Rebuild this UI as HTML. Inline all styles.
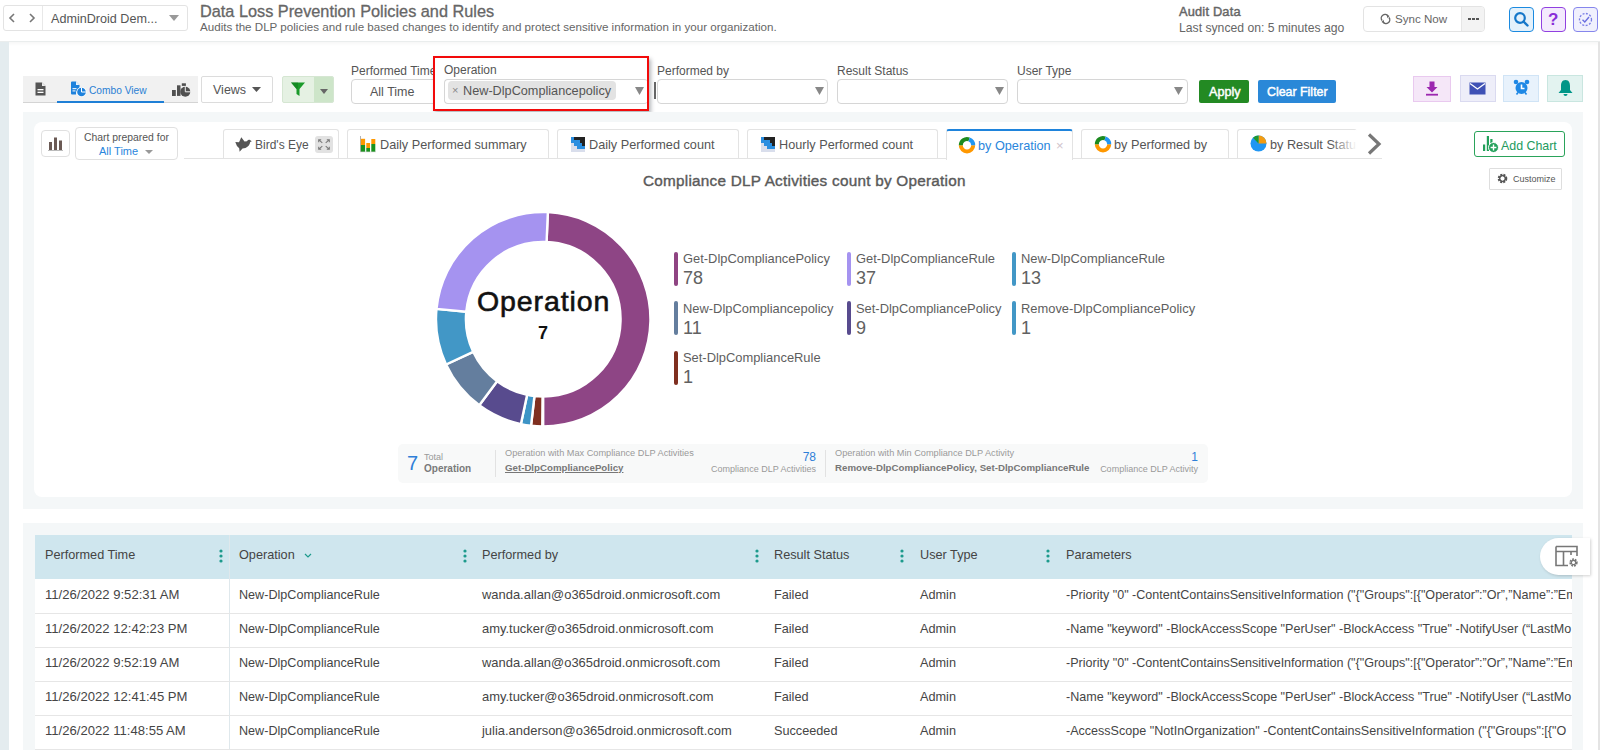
<!DOCTYPE html>
<html><head><meta charset="utf-8">
<style>
*{box-sizing:border-box;margin:0;padding:0}
html,body{width:1600px;height:750px;overflow:hidden;background:#fff;font-family:"Liberation Sans",sans-serif;color:#555}
.a{position:absolute}
.t{position:absolute;white-space:nowrap;line-height:1}
/* header */
#hdr{left:0;top:0;width:1600px;height:42px;background:#fff;border-bottom:1px solid #eaeded;box-shadow:0 2px 3px rgba(0,20,20,0.035)}
#lstrip{left:0;top:42px;width:9px;height:709px;background:#e4ecef}
#rstrip{left:1598px;top:42px;width:2px;height:709px;background:#e4e4e4}
.panel{background:#f4f7f8}
.card{background:#fff;border-radius:8px}
.box{border:1px solid #dcdcdc;border-radius:4px;background:#fff}
.tab{top:129px;height:29px;border:1px solid #e3e3e3;border-bottom:none;border-radius:3px 3px 0 0;background:#fff}
.tab.act{border-top:2px solid #1f84dc;height:31px}
.tt{top:139px;font-size:12.7px;color:#555}
.th{top:14px;font-size:12.7px;color:#444}
.td{font-size:12.7px;color:#454545}
</style></head>
<body>
<!-- HEADER -->
<div id="hdr" class="a"></div>
<div class="a box" style="left:3px;top:5px;width:185px;height:26px;border-color:#e3e3e3;border-radius:3px"></div>
<div class="a" style="left:42px;top:6px;width:1px;height:24px;background:#e8e8e8"></div>
<div class="t" style="left:51px;top:13px;font-size:12.6px;color:#555">AdminDroid Dem...</div>
<div class="t" style="left:200px;top:3px;font-size:16.3px;color:#666;-webkit-text-stroke:0.3px #666">Data Loss Prevention Policies and Rules</div>
<div class="t" style="left:200px;top:21px;font-size:11.6px;color:#666">Audits the DLP policies and rule based changes to identify and protect sensitive information in your organization.</div>
<div class="t" style="left:1179px;top:6px;font-size:12.8px;letter-spacing:0.2px;color:#666;-webkit-text-stroke:0.45px #666">Audit Data</div>
<div class="t" style="left:1179px;top:22px;font-size:12.2px;color:#666">Last synced on: 5 minutes ago</div>


<!-- nav arrows -->
<svg class="a" style="left:8px;top:13px" width="8" height="10" viewBox="0 0 8 10"><path d="M6 1 L2 5 L6 9" fill="none" stroke="#777" stroke-width="1.6"/></svg>
<svg class="a" style="left:28px;top:13px" width="8" height="10" viewBox="0 0 8 10"><path d="M2 1 L6 5 L2 9" fill="none" stroke="#777" stroke-width="1.6"/></svg>
<svg class="a" style="left:169px;top:15px" width="10" height="6" viewBox="0 0 10 6"><path d="M0 0 H10 L5 6Z" fill="#999"/></svg>
<!-- sync -->
<div class="a box" style="left:1363px;top:6px;width:122px;height:26px;border-color:#e3e3e3;overflow:hidden">
  <div class="a" style="left:97px;top:0;width:24px;height:26px;background:#f3f3f3;border-left:1px solid #e6e6e6"></div>
</div>
<svg class="a" style="left:1380px;top:13px" width="11" height="12" viewBox="0 0 11 12"><path d="M2 7.5 A3.7 3.7 0 0 1 8 3 M9 4.5 A3.7 3.7 0 0 1 3 9" fill="none" stroke="#666" stroke-width="1.4"/><path d="M6.5 1.5 L9.5 3 L7.5 5.2Z M4.5 10.5 L1.5 9 L3.5 6.8Z" fill="#666"/></svg>
<div class="t" style="left:1395px;top:13px;font-size:11.6px;color:#666">Sync Now</div>
<div class="a" style="left:1468px;top:18px;width:3px;height:2px;background:#555;box-shadow:4px 0 #555,8px 0 #555"></div>
<!-- search/help/check -->
<div class="a" style="left:1509px;top:7px;width:25px;height:25px;border:1.5px solid #1b8ae0;border-radius:4px;background:#e4f1fb"></div>
<svg class="a" style="left:1513px;top:11px" width="17" height="17" viewBox="0 0 17 17"><circle cx="7" cy="7" r="4.8" fill="none" stroke="#1577c9" stroke-width="2.2"/><path d="M10.5 10.5 L14.5 14.5" stroke="#1577c9" stroke-width="2.4" stroke-linecap="round"/></svg>
<div class="a" style="left:1541px;top:7px;width:25px;height:25px;border:1.5px solid #9140e0;border-radius:4px;background:#f3eafd"></div>
<div class="t" style="left:1548px;top:11px;font-size:17px;font-weight:bold;color:#8a2fd8">?</div>
<div class="a" style="left:1573px;top:7px;width:25px;height:25px;border:1.5px solid #8686ec;border-radius:4px;background:#f0f0fd"></div>
<svg class="a" style="left:1577px;top:11px" width="17" height="17" viewBox="0 0 17 17"><circle cx="8.5" cy="8.5" r="6" fill="none" stroke="#7a7ee6" stroke-width="1.3" stroke-dasharray="2 1.5"/><path d="M5.5 8.8 L7.8 11 L12 6" fill="none" stroke="#6a6ee0" stroke-width="1.4"/></svg>

<!-- FILTER ROW -->
<div class="a" style="left:23px;top:76px;width:175px;height:27px;background:#f1f1f1;border-bottom:1px solid #d4d4d4"></div>
<div class="a" style="left:57px;top:101px;width:107px;height:2px;background:#1f7fd6"></div>
<svg class="a" style="left:35px;top:82px" width="11" height="14" viewBox="0 0 11 14"><path d="M0.5 0.5 H7 L10.5 4 V13.5 H0.5Z" fill="#555"/><path d="M7 0.5 V4 H10.5Z" fill="#fff" opacity=".9"/><rect x="2.5" y="7" width="6" height="1.3" fill="#fff"/><rect x="2.5" y="9.7" width="6" height="1.3" fill="#fff"/></svg>
<svg class="a" style="left:70px;top:81px" width="17" height="16" viewBox="0 0 17 16"><path d="M1 1.5 Q1 0.5 2 0.5 H6 L9.5 4 V8 A5 5 0 0 0 6 13.5 H2 Q1 13.5 1 12.5Z" fill="#1e82dc"/><path d="M6 0.5 V4 H9.5Z" fill="#fff" opacity=".9"/><rect x="2.5" y="7" width="4" height="1.2" fill="#fff" opacity=".85"/><rect x="2.5" y="9.3" width="3" height="1.2" fill="#fff" opacity=".85"/><circle cx="11.5" cy="11" r="5" fill="#fff"/><circle cx="11.5" cy="11" r="4.3" fill="#1e82dc"/><path d="M11.5 6.7 V11 H15.8" fill="none" stroke="#fff" stroke-width="1"/></svg>
<div class="t" style="left:89px;top:86px;font-size:10.2px;color:#2a7fd4">Combo View</div>
<svg class="a" style="left:171px;top:83px" width="21" height="15" viewBox="0 0 21 15"><rect x="1" y="7" width="3.8" height="6" fill="#505050"/><rect x="6" y="2.3" width="3.5" height="10.6" fill="#505050"/><rect x="10.8" y="0.3" width="4.1" height="2.6" fill="#505050"/><circle cx="14.3" cy="8.8" r="5" fill="#505050"/><path d="M14.3 8.8 V3.3 M14.3 8.8 H19.8" stroke="#f1f1f1" stroke-width="1"/></svg>
<div class="a box" style="left:201px;top:76px;width:72px;height:27px;border-color:#dcdcdc;border-radius:2px"></div>
<div class="t" style="left:213px;top:84px;font-size:12.5px;color:#555">Views</div>
<svg class="a" style="left:252px;top:87px" width="9" height="5" viewBox="0 0 9 5"><path d="M0 0 H9 L4.5 5Z" fill="#555"/></svg>
<div class="a" style="left:282px;top:76px;width:52px;height:27px;background:#e5f1e3;border:1px solid #d5e6d2;border-radius:2px;overflow:hidden"><div class="a" style="left:31px;top:0;width:20px;height:26px;background:#cde5c9"></div></div>
<svg class="a" style="left:291px;top:82px" width="14" height="15" viewBox="0 0 14 15"><path d="M0 0.5 H14 L8.5 7 V14 L5.5 12 V7Z" fill="#1a9a2a"/><path d="M0 0.5 H7 V6 L5.5 7Z" fill="#0e7a1c" opacity=".5"/></svg>
<svg class="a" style="left:320px;top:89px" width="8" height="5" viewBox="0 0 8 5"><path d="M0 0 H8 L4 5Z" fill="#666"/></svg>

<div class="t" style="left:351px;top:65px;font-size:12px;color:#555">Performed Time</div>
<div class="a box" style="left:351px;top:79px;width:100px;height:25px;border-color:#d6d6d6"></div>
<div class="t" style="left:370px;top:86px;font-size:12.5px;color:#555">All Time</div>

<!-- Operation highlighted -->
<div class="a" style="left:433px;top:56px;width:216px;height:55px;background:#fff;border:2px solid #f20a0a;box-shadow:2px 3px 4px rgba(40,50,60,0.35)"></div>
<div class="t" style="left:444px;top:64px;font-size:12px;color:#555">Operation</div>
<div class="a box" style="left:444px;top:79px;width:204px;height:25px;border-color:#d6d6d6;border-right:none"></div>
<div class="a" style="left:448px;top:81px;width:168px;height:19px;background:#e3e3e3;border-radius:4px"></div>
<div class="t" style="left:452px;top:85px;font-size:11px;color:#888">×</div>
<div class="t" style="left:463px;top:85px;font-size:12.7px;color:#555">New-DlpCompliancepolicy</div>
<svg class="a" style="left:635px;top:87px" width="9" height="8" viewBox="0 0 9 8"><path d="M0 0 H9 L4.5 8Z" fill="#888"/></svg>
<div class="a" style="left:647px;top:58px;width:2px;height:51px;background:#f20a0a"></div>
<div class="a" style="left:654px;top:82px;width:1.5px;height:17px;background:#666"></div>

<div class="t" style="left:657px;top:65px;font-size:12px;color:#555">Performed by</div>
<div class="a box" style="left:657px;top:79px;width:171px;height:25px;border-color:#d6d6d6"></div>
<svg class="a" style="left:815px;top:87px" width="9" height="8" viewBox="0 0 9 8"><path d="M0 0 H9 L4.5 8Z" fill="#888"/></svg>
<div class="t" style="left:837px;top:65px;font-size:12px;color:#555">Result Status</div>
<div class="a box" style="left:837px;top:79px;width:171px;height:25px;border-color:#d6d6d6"></div>
<svg class="a" style="left:995px;top:87px" width="9" height="8" viewBox="0 0 9 8"><path d="M0 0 H9 L4.5 8Z" fill="#888"/></svg>
<div class="t" style="left:1017px;top:65px;font-size:12px;color:#555">User Type</div>
<div class="a box" style="left:1017px;top:79px;width:171px;height:25px;border-color:#d6d6d6"></div>
<svg class="a" style="left:1174px;top:87px" width="9" height="8" viewBox="0 0 9 8"><path d="M0 0 H9 L4.5 8Z" fill="#888"/></svg>

<div class="a" style="left:1199px;top:80px;width:50px;height:23px;background:#238a23;border-radius:2px"></div>
<div class="t" style="left:1209px;top:86px;font-size:12.6px;color:#fff;-webkit-text-stroke:0.45px #fff">Apply</div>
<div class="a" style="left:1258px;top:80px;width:78px;height:23px;background:#2a88d8;border-radius:2px"></div>
<div class="t" style="left:1267px;top:86px;font-size:12.4px;color:#fff;-webkit-text-stroke:0.45px #fff">Clear Filter</div>

<div class="a" style="left:1413px;top:76px;width:38px;height:26px;background:#f5e7f8;border:1px solid #e9c9ef"></div>
<svg class="a" style="left:1425px;top:81px" width="14" height="15" viewBox="0 0 14 15"><path d="M4.5 0.5 H9.5 V6 H12.5 L7 11.5 L1.5 6 H4.5Z" fill="#9c27b0"/><rect x="1" y="12.8" width="12" height="1.8" fill="#9c27b0"/></svg>
<div class="a" style="left:1460px;top:75px;width:36px;height:27px;background:#eeeef9;border:1px solid #dadaf0"></div>
<svg class="a" style="left:1469px;top:82px" width="17" height="13" viewBox="0 0 17 13"><rect x="0.5" y="0.5" width="16" height="12" fill="#3f51b5"/><path d="M1 1.5 L8.5 7 L16 1.5" fill="none" stroke="#fff" stroke-width="1.3"/></svg>
<div class="a" style="left:1503px;top:75px;width:36px;height:27px;background:#e8f2fc;border:1px solid #d0e4f6"></div>
<svg class="a" style="left:1513px;top:79px" width="17" height="17" viewBox="0 0 17 17"><circle cx="8.5" cy="9" r="6" fill="#1e88e5"/><path d="M8.5 5.5 V9.5 H11.5" fill="none" stroke="#fff" stroke-width="1.6"/><circle cx="3" cy="3" r="2.3" fill="#1e88e5"/><circle cx="14" cy="3" r="2.3" fill="#1e88e5"/><path d="M3.5 15.5 L5 13.5 M13.5 15.5 L12 13.5" stroke="#1e88e5" stroke-width="1.6"/></svg>
<div class="a" style="left:1547px;top:75px;width:36px;height:27px;background:#e3f3f0;border:1px solid #c9e6e0"></div>
<svg class="a" style="left:1558px;top:79px" width="15" height="18" viewBox="0 0 15 18"><path d="M7.5 1 C4 1 3 4 3 7 V11 L0.5 14 H14.5 L12 11 V7 C12 4 11 1 7.5 1Z" fill="#009688"/><path d="M5.5 15 H9.5 A2 2 0 0 1 5.5 15Z" fill="#009688"/></svg>


<!-- CHART PANEL -->
<div class="a panel" style="left:23px;top:112px;width:1560px;height:397px"></div>
<div class="a card" style="left:34px;top:122px;width:1538px;height:375px"></div>
<div class="a box" style="left:41px;top:130px;width:29px;height:27px;border-color:#e0e0e0"></div>
<svg class="a" style="left:48px;top:136px" width="15" height="15" viewBox="0 0 15 15"><rect x="1" y="6" width="3" height="8" fill="#6b5a55"/><rect x="6" y="1.5" width="3" height="12.5" fill="#6b5a55"/><rect x="11" y="4.5" width="3" height="9.5" fill="#6b5a55"/><rect x="0" y="14" width="15" height="1" fill="#bbb"/></svg>
<div class="a box" style="left:75px;top:127px;width:103px;height:33px;border-color:#e0e0e0"></div>
<div class="t" style="left:84px;top:133px;font-size:10.4px;color:#555">Chart prepared for</div>
<div class="t" style="left:99px;top:146px;font-size:11px;color:#2a86dc">All Time</div>
<svg class="a" style="left:145px;top:150px" width="8" height="4" viewBox="0 0 8 4"><path d="M0 0 H8 L4 4Z" fill="#999"/></svg>

<!-- tabs -->
<div class="a" style="left:184px;top:158px;width:1198px;height:1px;background:#e3e3e3"></div>
<div class="a tab" style="left:223px;width:116px"></div>
<div class="a tab" style="left:347px;width:202px"></div>
<div class="a tab" style="left:557px;width:182px"></div>
<div class="a tab" style="left:747px;width:191px"></div>
<div class="a tab act" style="left:946px;width:127px"></div>
<div class="a tab" style="left:1081px;width:148px"></div>
<div class="a tab" style="left:1237px;width:120px;border-right:none"></div>

<svg class="a" style="left:235px;top:137px" width="18" height="16" viewBox="0 0 18 16"><path d="M0.3 5 L4 5.3 L6.3 0.3 L9.5 4.5 L12 4.2 Q13 2.5 14.6 2.8 L16.8 4.2 L15.2 5.1 Q14.8 9 10.5 11 L7.5 11.6 L4.6 14.8 L4.2 11.2 Q1.5 9.5 0.3 5Z" fill="#555"/></svg>
<div class="t tt" style="left:255px;font-size:12px">Bird's Eye</div>
<div class="a" style="left:315px;top:136px;width:18px;height:17px;background:#e2e2e2;border-radius:3px"></div>
<svg class="a" style="left:318px;top:139px" width="12" height="11" viewBox="0 0 12 11"><path d="M0.7 3.2 V0.7 H3.2 M8.8 0.7 H11.3 V3.2 M11.3 7.8 V10.3 H8.8 M3.2 10.3 H0.7 V7.8 M0.9 0.9 L4.3 3.9 M11.1 0.9 L7.7 3.9 M11.1 10.1 L7.7 7.1 M0.9 10.1 L4.3 7.1" fill="none" stroke="#7a7a7a" stroke-width="1.1"/></svg>

<svg class="a" style="left:360px;top:136px" width="16" height="17" viewBox="0 0 16 17"><rect x="0" y="0" width="0.9" height="16" fill="#aaa"/><rect x="0.9" y="2.8" width="4.2" height="6.2" fill="#ff9800"/><rect x="0.9" y="9" width="4.2" height="7" fill="#1b921f"/><rect x="6.3" y="7" width="3.7" height="5" fill="#ff9800"/><rect x="6.3" y="12" width="3.7" height="4" fill="#1b921f"/><rect x="11.3" y="3" width="4" height="5" fill="#ff9800"/><rect x="11.3" y="8" width="4" height="8" fill="#1b921f"/><rect x="0" y="15.6" width="16" height="0.6" fill="#ccc"/></svg>
<div class="t tt" style="left:380px">Daily Performed summary</div>

<svg class="a" style="left:571px;top:137px" width="14" height="15" viewBox="0 0 14 15"><rect x="0" y="0" width="14" height="15" fill="#d9deec"/><rect x="0" y="0" width="3" height="3" fill="#2a8ee0"/><rect x="3" y="0" width="11" height="3" fill="#222"/><rect x="0" y="3" width="9" height="3" fill="#2a8ee0"/><rect x="9" y="3" width="5" height="3" fill="#222"/><rect x="3" y="6" width="8" height="3" fill="#2a8ee0"/><rect x="11" y="6" width="3" height="3" fill="#222"/><rect x="6" y="9" width="8" height="3" fill="#2a8ee0"/></svg>
<div class="t tt" style="left:589px">Daily Performed count</div>
<svg class="a" style="left:761px;top:137px" width="14" height="15" viewBox="0 0 14 15"><rect x="0" y="0" width="14" height="15" fill="#d9deec"/><rect x="0" y="0" width="3" height="3" fill="#2a8ee0"/><rect x="3" y="0" width="11" height="3" fill="#222"/><rect x="0" y="3" width="9" height="3" fill="#2a8ee0"/><rect x="9" y="3" width="5" height="3" fill="#222"/><rect x="3" y="6" width="8" height="3" fill="#2a8ee0"/><rect x="11" y="6" width="3" height="3" fill="#222"/><rect x="6" y="9" width="8" height="3" fill="#2a8ee0"/></svg>
<div class="t tt" style="left:779px">Hourly Performed count</div>

<svg class="a" style="left:958px;top:136px" width="18" height="18" viewBox="0 0 18 18"><path d="M15.2 9.2 A6.2 6.2 0 0 1 2.8 9.2" fill="none" stroke="#ff9800" stroke-width="4"/><path d="M2.8 9.2 A6.2 6.2 0 0 1 11.12 3.37" fill="none" stroke="#1b8a1f" stroke-width="4"/><path d="M11.12 3.37 A6.2 6.2 0 0 1 15.2 9.2" fill="none" stroke="#2196f3" stroke-width="4"/></svg>
<div class="t tt" style="left:978px;top:140px;color:#2a86dc">by Operation</div>
<div class="t" style="left:1056px;top:139px;font-size:13px;color:#d0c4cc">×</div>
<svg class="a" style="left:1093.5px;top:135.2px" width="18" height="18" viewBox="0 0 18 18"><path d="M15.2 9.2 A6.2 6.2 0 0 1 2.8 9.2" fill="none" stroke="#ff9800" stroke-width="4"/><path d="M2.8 9.2 A6.2 6.2 0 0 1 11.12 3.37" fill="none" stroke="#1b8a1f" stroke-width="4"/><path d="M11.12 3.37 A6.2 6.2 0 0 1 15.2 9.2" fill="none" stroke="#2196f3" stroke-width="4"/></svg>
<div class="t tt" style="left:1114px">by Performed by</div>
<svg class="a" style="left:1250px;top:135px" width="17" height="17" viewBox="0 0 17 17"><circle cx="8.5" cy="8.5" r="8" fill="#2196f3"/><path d="M8.5 8.5 V0.5 A8 8 0 0 1 16.5 8.5Z" fill="#f39c12"/><path d="M8.5 8.5 V0.5 A8 8 0 0 0 3 2.7Z" fill="#1f9a2f"/></svg>
<div class="t tt" style="left:1270px">by Result Statu</div>
<div class="a" style="left:1330px;top:130px;width:27px;height:27px;background:linear-gradient(to right,rgba(255,255,255,0),#fff)"></div>
<svg class="a" style="left:1367px;top:133px" width="15" height="22" viewBox="0 0 15 22"><path d="M2 1.5 L12 11 L2 20.5" fill="none" stroke="#777" stroke-width="3.2"/></svg>

<div class="a" style="left:1474px;top:131px;width:91px;height:26px;border:1.5px solid #2aa35a;border-radius:3px;background:#fff"></div>
<svg class="a" style="left:1482px;top:135px" width="17" height="18" viewBox="0 0 17 18"><rect x="1" y="9.5" width="2.2" height="6.5" fill="#22a05a"/><rect x="4.8" y="1" width="2.2" height="15" fill="#22a05a"/><rect x="8.3" y="4" width="2.2" height="8" fill="#22a05a"/><circle cx="11.5" cy="12.5" r="5" fill="#22a05a" stroke="#fff" stroke-width="1"/><path d="M11.5 9.6 V15.4 M8.6 12.5 H14.4" stroke="#fff" stroke-width="1.4"/></svg>
<div class="t" style="left:1501px;top:140px;font-size:12.4px;color:#239a5e">Add Chart</div>
<div class="a box" style="left:1489px;top:168px;width:73px;height:22px;border-color:#dedede;border-radius:1px"></div>
<svg class="a" style="left:1497px;top:173px" width="11" height="11" viewBox="0 0 11 11"><circle cx="5.5" cy="5.5" r="3.6" fill="none" stroke="#555" stroke-width="2.4" stroke-dasharray="1.9 1"/><circle cx="5.5" cy="5.5" r="2.8" fill="none" stroke="#555" stroke-width="1.3"/></svg>
<div class="t" style="left:1513px;top:175px;font-size:9px;color:#555">Customize</div>

<div class="t" style="left:643px;top:173px;font-size:15.3px;letter-spacing:0.25px;color:#5a5a5a;-webkit-text-stroke:0.4px #5a5a5a">Compliance DLP Activities count by Operation</div>

<svg class="a" style="left:436.1px;top:211.6px" width="214.4" height="214.4" viewBox="0 0 214.4 214.4"><path d="M111.88 0.10 A107.20 107.20 0 0 1 107.20 214.40 L107.20 184.50 A77.30 77.30 0 0 0 110.57 29.97Z" fill="#8e4585" stroke="#fff" stroke-width="2.4" stroke-linejoin="miter"/><path d="M106.26 214.40 A107.20 107.20 0 0 1 95.06 213.71 L98.45 184.00 A77.30 77.30 0 0 0 106.53 184.50Z" fill="#7f2f20" stroke="#fff" stroke-width="2.4" stroke-linejoin="miter"/><path d="M95.06 213.71 A107.20 107.20 0 0 1 84.91 212.06 L91.13 182.81 A77.30 77.30 0 0 0 98.45 184.00Z" fill="#3d94c6" stroke="#fff" stroke-width="2.4" stroke-linejoin="miter"/><path d="M84.91 212.06 A107.20 107.20 0 0 1 43.28 193.26 L61.11 169.26 A77.30 77.30 0 0 0 91.13 182.81Z" fill="#584b8e" stroke="#fff" stroke-width="2.4" stroke-linejoin="miter"/><path d="M43.28 193.26 A107.20 107.20 0 0 1 10.04 152.50 L37.14 139.87 A77.30 77.30 0 0 0 61.11 169.26Z" fill="#647e9e" stroke="#fff" stroke-width="2.4" stroke-linejoin="miter"/><path d="M10.04 152.50 A107.20 107.20 0 0 1 0.49 96.93 L30.26 99.79 A77.30 77.30 0 0 0 37.14 139.87Z" fill="#4297c6" stroke="#fff" stroke-width="2.4" stroke-linejoin="miter"/><path d="M0.49 96.93 A107.20 107.20 0 0 1 111.88 0.10 L110.57 29.97 A77.30 77.30 0 0 0 30.26 99.79Z" fill="#a593f0" stroke="#fff" stroke-width="2.4" stroke-linejoin="miter"/></svg>
<div class="t" style="left:477px;top:287px;font-size:28.5px;letter-spacing:0.9px;color:#111;-webkit-text-stroke:0.6px #111">Operation</div>
<div class="t" style="left:538px;top:324px;font-size:18px;font-weight:bold;color:#111">7</div>
<div class="a" style="left:674px;top:252px;width:4px;height:34px;border-radius:2px;background:#8f4482"></div><div class="t" style="left:683px;top:253px;font-size:12.9px;color:#5e5e5e">Get-DlpCompliancePolicy</div><div class="t" style="left:683px;top:269px;font-size:18px;color:#616161">78</div>
<div class="a" style="left:847px;top:252px;width:4px;height:34px;border-radius:2px;background:#a593f0"></div><div class="t" style="left:856px;top:253px;font-size:12.9px;color:#5e5e5e">Get-DlpComplianceRule</div><div class="t" style="left:856px;top:269px;font-size:18px;color:#616161">37</div>
<div class="a" style="left:1012px;top:252px;width:4px;height:34px;border-radius:2px;background:#4297c6"></div><div class="t" style="left:1021px;top:253px;font-size:12.9px;color:#5e5e5e">New-DlpComplianceRule</div><div class="t" style="left:1021px;top:269px;font-size:18px;color:#616161">13</div>
<div class="a" style="left:674px;top:301px;width:4px;height:34px;border-radius:2px;background:#647e9e"></div><div class="t" style="left:683px;top:303px;font-size:12.9px;color:#5e5e5e">New-DlpCompliancepolicy</div><div class="t" style="left:683px;top:319px;font-size:18px;color:#616161">11</div>
<div class="a" style="left:847px;top:301px;width:4px;height:34px;border-radius:2px;background:#584b8e"></div><div class="t" style="left:856px;top:303px;font-size:12.9px;color:#5e5e5e">Set-DlpCompliancePolicy</div><div class="t" style="left:856px;top:319px;font-size:18px;color:#616161">9</div>
<div class="a" style="left:1012px;top:301px;width:4px;height:34px;border-radius:2px;background:#4297c6"></div><div class="t" style="left:1021px;top:303px;font-size:12.9px;color:#5e5e5e">Remove-DlpCompliancePolicy</div><div class="t" style="left:1021px;top:319px;font-size:18px;color:#616161">1</div>
<div class="a" style="left:674px;top:351px;width:4px;height:34px;border-radius:2px;background:#7f2f20"></div><div class="t" style="left:683px;top:352px;font-size:12.9px;color:#5e5e5e">Set-DlpComplianceRule</div><div class="t" style="left:683px;top:368px;font-size:18px;color:#616161">1</div>

<!-- summary bar -->
<div class="a" style="left:398px;top:444px;width:810px;height:39px;background:#f8f9f9;border-radius:5px"></div>
<div class="t" style="left:407px;top:453px;font-size:20px;color:#2f7fd8">7</div>
<div class="t" style="left:424px;top:453px;font-size:9px;color:#999">Total</div>
<div class="t" style="left:424px;top:464px;font-size:10px;font-weight:bold;color:#7a7a7a">Operation</div>
<div class="a" style="left:495px;top:450px;width:1px;height:27px;background:#e2e2e2"></div>
<div class="t" style="left:505px;top:449px;font-size:9.2px;color:#9a9a9a">Operation with Max Compliance DLP Activities</div>
<div class="t" style="left:505px;top:463px;font-size:9.7px;font-weight:bold;color:#777;text-decoration:underline">Get-DlpCompliancePolicy</div>
<div class="t" style="left:796px;top:451px;width:20px;text-align:right;font-size:12px;color:#2f7fd8">78</div>
<div class="t" style="left:690px;top:465px;width:126px;text-align:right;font-size:9px;color:#9a9a9a">Compliance DLP Activities</div>
<div class="a" style="left:825px;top:450px;width:1px;height:27px;background:#e2e2e2"></div>
<div class="t" style="left:835px;top:449px;font-size:9.2px;color:#9a9a9a">Operation with Min Compliance DLP Activity</div>
<div class="t" style="left:835px;top:463px;font-size:9.7px;font-weight:bold;color:#777">Remove-DlpCompliancePolicy, Set-DlpComplianceRule</div>
<div class="t" style="left:1178px;top:451px;width:20px;text-align:right;font-size:12px;color:#2f7fd8">1</div>
<div class="t" style="left:1070px;top:465px;width:128px;text-align:right;font-size:9px;color:#9a9a9a">Compliance DLP Activity</div>


<!-- TABLE PANEL -->
<div class="a panel" style="left:23px;top:523px;width:1560px;height:227px"></div>
<div class="a" style="left:35px;top:535px;width:1537px;height:215px;background:#fff;overflow:hidden">
<div class="a" style="left:0;top:0;width:1537px;height:44px;background:#cfe6ee"></div>
<div class="t th" style="left:10px">Performed Time</div><svg class="a" style="left:184px;top:13px" width="4" height="16" viewBox="0 0 4 16"><circle cx="2" cy="3" r="1.6" fill="#1d9a8c"/><circle cx="2" cy="8" r="1.6" fill="#1d9a8c"/><circle cx="2" cy="13" r="1.6" fill="#1d9a8c"/></svg><div class="t th" style="left:204px">Operation</div><svg class="a" style="left:428px;top:13px" width="4" height="16" viewBox="0 0 4 16"><circle cx="2" cy="3" r="1.6" fill="#1d9a8c"/><circle cx="2" cy="8" r="1.6" fill="#1d9a8c"/><circle cx="2" cy="13" r="1.6" fill="#1d9a8c"/></svg><div class="t th" style="left:447px">Performed by</div><svg class="a" style="left:720px;top:13px" width="4" height="16" viewBox="0 0 4 16"><circle cx="2" cy="3" r="1.6" fill="#1d9a8c"/><circle cx="2" cy="8" r="1.6" fill="#1d9a8c"/><circle cx="2" cy="13" r="1.6" fill="#1d9a8c"/></svg><div class="t th" style="left:739px">Result Status</div><svg class="a" style="left:865px;top:13px" width="4" height="16" viewBox="0 0 4 16"><circle cx="2" cy="3" r="1.6" fill="#1d9a8c"/><circle cx="2" cy="8" r="1.6" fill="#1d9a8c"/><circle cx="2" cy="13" r="1.6" fill="#1d9a8c"/></svg><div class="t th" style="left:885px">User Type</div><svg class="a" style="left:1011px;top:13px" width="4" height="16" viewBox="0 0 4 16"><circle cx="2" cy="3" r="1.6" fill="#1d9a8c"/><circle cx="2" cy="8" r="1.6" fill="#1d9a8c"/><circle cx="2" cy="13" r="1.6" fill="#1d9a8c"/></svg><div class="t th" style="left:1031px">Parameters</div><svg class="a" style="left:269px;top:18px" width="8" height="6" viewBox="0 0 8 6"><path d="M1 1 L4 4 L7 1" fill="none" stroke="#1d9a8c" stroke-width="1.2"/></svg><div class="a" style="left:194px;top:0;width:1px;height:215px;background:#dfe8ec"></div><div class="a" style="left:0;top:78px;width:1537px;height:1px;background:#e6e6e6"></div><div class="t td" style="left:10px;top:53px;font-size:13.1px">11/26/2022 9:52:31 AM</div><div class="t td" style="left:204px;top:54px;font-size:12.6px">New-DlpComplianceRule</div><div class="t td" style="left:447px;top:54px;font-size:12.95px">wanda.allan@o365droid.onmicrosoft.com</div><div class="t td" style="left:739px;top:54px">Failed</div><div class="t td" style="left:885px;top:54px">Admin</div><div class="t td" style="left:1031px;top:54px;font-size:12.55px">-Priority &quot;0&quot; -ContentContainsSensitiveInformation (&quot;{&quot;Groups&quot;:[{&quot;Operator”:”Or”,”Name”:”Em</div>
<div class="a" style="left:0;top:112px;width:1537px;height:1px;background:#e6e6e6"></div><div class="t td" style="left:10px;top:87px;font-size:13.1px">11/26/2022 12:42:23 PM</div><div class="t td" style="left:204px;top:88px;font-size:12.6px">New-DlpComplianceRule</div><div class="t td" style="left:447px;top:88px;font-size:12.95px">amy.tucker@o365droid.onmicrosoft.com</div><div class="t td" style="left:739px;top:88px">Failed</div><div class="t td" style="left:885px;top:88px">Admin</div><div class="t td" style="left:1031px;top:88px;font-size:12.55px">-Name &quot;keyword&quot; -BlockAccessScope &quot;PerUser&quot; -BlockAccess &quot;True&quot; -NotifyUser (“LastMo</div>
<div class="a" style="left:0;top:146px;width:1537px;height:1px;background:#e6e6e6"></div><div class="t td" style="left:10px;top:121px;font-size:13.1px">11/26/2022 9:52:19 AM</div><div class="t td" style="left:204px;top:122px;font-size:12.6px">New-DlpComplianceRule</div><div class="t td" style="left:447px;top:122px;font-size:12.95px">wanda.allan@o365droid.onmicrosoft.com</div><div class="t td" style="left:739px;top:122px">Failed</div><div class="t td" style="left:885px;top:122px">Admin</div><div class="t td" style="left:1031px;top:122px;font-size:12.55px">-Priority &quot;0&quot; -ContentContainsSensitiveInformation (&quot;{&quot;Groups&quot;:[{&quot;Operator”:”Or”,”Name”:”Em</div>
<div class="a" style="left:0;top:180px;width:1537px;height:1px;background:#e6e6e6"></div><div class="t td" style="left:10px;top:155px;font-size:13.1px">11/26/2022 12:41:45 PM</div><div class="t td" style="left:204px;top:156px;font-size:12.6px">New-DlpComplianceRule</div><div class="t td" style="left:447px;top:156px;font-size:12.95px">amy.tucker@o365droid.onmicrosoft.com</div><div class="t td" style="left:739px;top:156px">Failed</div><div class="t td" style="left:885px;top:156px">Admin</div><div class="t td" style="left:1031px;top:156px;font-size:12.55px">-Name &quot;keyword&quot; -BlockAccessScope &quot;PerUser&quot; -BlockAccess &quot;True&quot; -NotifyUser (“LastMo</div>
<div class="a" style="left:0;top:214px;width:1537px;height:1px;background:#e6e6e6"></div><div class="t td" style="left:10px;top:189px;font-size:13.1px">11/26/2022 11:48:55 AM</div><div class="t td" style="left:204px;top:190px;font-size:12.6px">New-DlpComplianceRule</div><div class="t td" style="left:447px;top:190px;font-size:12.95px">julia.anderson@o365droid.onmicrosoft.com</div><div class="t td" style="left:739px;top:190px">Succeeded</div><div class="t td" style="left:885px;top:190px">Admin</div><div class="t td" style="left:1031px;top:190px;font-size:12.55px">-AccessScope &quot;NotInOrganization&quot; -ContentContainsSensitiveInformation (&quot;{&quot;Groups&quot;:[{&quot;O</div>
</div>
<div class="a" style="left:1540px;top:538px;width:50px;height:37px;background:#fff;border-radius:19px 0 0 19px;box-shadow:1px 1px 3px rgba(0,0,0,0.18)"></div>
<svg class="a" style="left:1555px;top:545px" width="25" height="24" viewBox="0 0 25 24"><path d="M1 1.5 H22 V11 M1 1.5 V20.5 H13 M1 6.5 H22 M8.5 6.5 V20.5 M16 6.5 V10" fill="none" stroke="#777" stroke-width="1.6"/><circle cx="18.5" cy="17.5" r="3" fill="none" stroke="#777" stroke-width="2.4" stroke-dasharray="1.6 0.9"/><circle cx="18.5" cy="17.5" r="2.2" fill="none" stroke="#777" stroke-width="1.2"/></svg>

<div id="lstrip" class="a"></div>
<div id="rstrip" class="a"></div>

</body></html>
